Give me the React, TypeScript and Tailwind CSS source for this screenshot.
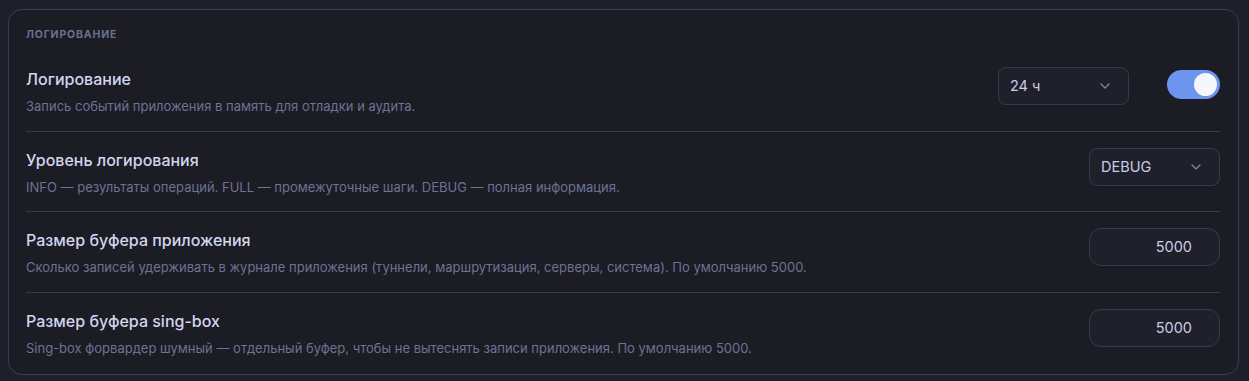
import { ChevronDown } from 'lucide-react';

const font = { fontFamily: 'Inter, "Noto Sans", sans-serif' };

function Select({ value }: { value: string }) {
  return (
    <div className="flex h-[38px] w-[131px] items-center justify-between rounded-lg border border-[#363a50] bg-[#1f2029] pl-[11px] pr-[15px] text-[14.5px] text-[#c9cce6]">
      <span>{value}</span>
      <ChevronDown size={16} strokeWidth={2} className="text-[#7e829f]" />
    </div>
  );
}

function NumberBox({ value }: { value: string }) {
  return (
    <div className="flex h-[38px] w-[131px] items-center justify-end rounded-xl border border-[#363a50] bg-[#1f2029] pr-[27px] text-[14.5px] text-[#c9cce6]">
      {value}
    </div>
  );
}

function Toggle() {
  return (
    <div className="mt-[3px] flex h-[29px] w-[53px] items-center justify-end rounded-full bg-[#6b95ee] pr-[3px]">
      <div className="h-[23px] w-[23px] rounded-full bg-[#f6f7fb]" />
    </div>
  );
}

function Row({
  title,
  desc,
  last,
  children,
}: {
  title: string;
  desc: string;
  last?: boolean;
  children: React.ReactNode;
}) {
  return (
    <div
      className={`flex h-[80.5px] items-start justify-between pt-4 ${
        last ? '' : 'border-b border-[#363a52]'
      }`}
    >
      <div>
        <div className="text-[16px] leading-6 font-medium text-[#d3d6ee]">{title}</div>
        <div className="mt-[6px] text-[13px] leading-[18px] text-[#6e7293]">{desc}</div>
      </div>
      <div className="flex items-start gap-[38px]">{children}</div>
    </div>
  );
}

export default function App() {
  return (
    <div className="h-[381px] w-full bg-[#1e1f29] pt-[9px]" style={font}>
      <div className="ml-2 h-[366px] w-[1231px] rounded-[14px] border border-[#393d56] bg-[#1b1c24] pl-[17px] pr-[18px] pt-[17px]">
        <div className="mb-2 text-[10.5px] leading-4 font-bold tracking-[0.08em] text-[#6c7090] uppercase">
          Логирование
        </div>
        <Row title="Логирование" desc="Запись событий приложения в память для отладки и аудита.">
          <Select value="24 ч" />
          <Toggle />
        </Row>
        <Row
          title="Уровень логирования"
          desc="INFO — результаты операций. FULL — промежуточные шаги. DEBUG — полная информация."
        >
          <Select value="DEBUG" />
        </Row>
        <Row
          title="Размер буфера приложения"
          desc="Сколько записей удерживать в журнале приложения (туннели, маршрутизация, серверы, система). По умолчанию 5000."
        >
          <NumberBox value="5000" />
        </Row>
        <Row
          title="Размер буфера sing-box"
          desc="Sing-box форвардер шумный — отдельный буфер, чтобы не вытеснять записи приложения. По умолчанию 5000."
          last
        >
          <NumberBox value="5000" />
        </Row>
      </div>
    </div>
  );
}
